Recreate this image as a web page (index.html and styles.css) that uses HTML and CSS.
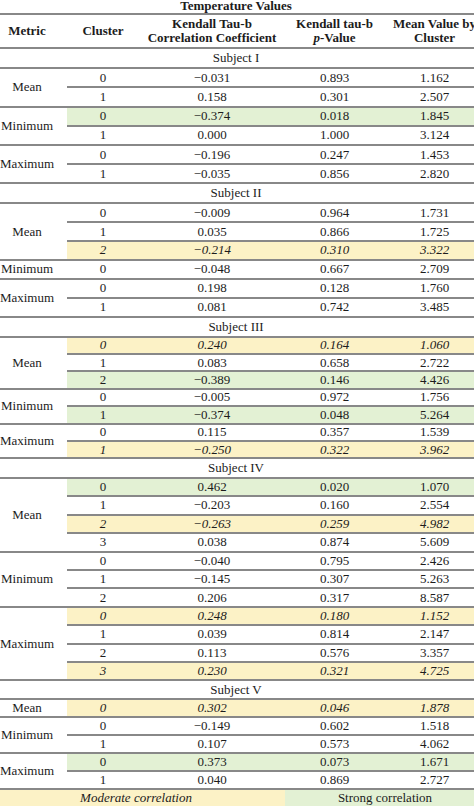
FILE: index.html
```html
<!DOCTYPE html>
<html>
<head>
<meta charset="utf-8">
<link rel="stylesheet" href="styles.css">
</head>
<body>
<div class="page">
<table class="tbl">
<colgroup>
<col class="c1"><col class="c2"><col class="c3"><col class="c4"><col class="c5">
</colgroup>
<tr class="rt"><th colspan="5" class="title"><div class="title-text">Temperature Values</div></th></tr>
<tr class="rh">
<th>Metric</th><th>Cluster</th><th>Kendall Tau-b<br>Correlation Coefficient</th><th>Kendall tau-b<br><i>p</i>-Value</th><th>Mean Value by<br>Cluster</th>
</tr>

<tr class="rs"><td colspan="5">Subject I</td></tr>
<tr class="r1"><td rowspan="2" class="m">Mean</td><td>0</td><td>−0.031</td><td>0.893</td><td>1.162</td></tr>
<tr class="r1"><td>1</td><td>0.158</td><td>0.301</td><td>2.507</td></tr>
<tr class="r1 g"><td rowspan="2" class="m">Minimum</td><td>0</td><td>−0.374</td><td>0.018</td><td>1.845</td></tr>
<tr class="r1"><td>1</td><td>0.000</td><td>1.000</td><td>3.124</td></tr>
<tr class="r1"><td rowspan="2" class="m">Maximum</td><td>0</td><td>−0.196</td><td>0.247</td><td>1.453</td></tr>
<tr class="r1"><td>1</td><td>−0.035</td><td>0.856</td><td>2.820</td></tr>

<tr class="rs"><td colspan="5">Subject II</td></tr>
<tr class="r2"><td rowspan="3" class="m">Mean</td><td>0</td><td>−0.009</td><td>0.964</td><td>1.731</td></tr>
<tr class="r2"><td>1</td><td>0.035</td><td>0.866</td><td>1.725</td></tr>
<tr class="r2 y"><td>2</td><td>−0.214</td><td>0.310</td><td>3.322</td></tr>
<tr class="r2"><td class="m">Minimum</td><td>0</td><td>−0.048</td><td>0.667</td><td>2.709</td></tr>
<tr class="r2"><td rowspan="2" class="m">Maximum</td><td>0</td><td>0.198</td><td>0.128</td><td>1.760</td></tr>
<tr class="r2"><td>1</td><td>0.081</td><td>0.742</td><td>3.485</td></tr>

<tr class="rs"><td colspan="5">Subject III</td></tr>
<tr class="r3 y"><td rowspan="3" class="m">Mean</td><td>0</td><td>0.240</td><td>0.164</td><td>1.060</td></tr>
<tr class="r3"><td>1</td><td>0.083</td><td>0.658</td><td>2.722</td></tr>
<tr class="r3 g"><td>2</td><td>−0.389</td><td>0.146</td><td>4.426</td></tr>
<tr class="r3"><td rowspan="2" class="m">Minimum</td><td>0</td><td>−0.005</td><td>0.972</td><td>1.756</td></tr>
<tr class="r3 g"><td>1</td><td>−0.374</td><td>0.048</td><td>5.264</td></tr>
<tr class="r3"><td rowspan="2" class="m">Maximum</td><td>0</td><td>0.115</td><td>0.357</td><td>1.539</td></tr>
<tr class="r3 y"><td>1</td><td>−0.250</td><td>0.322</td><td>3.962</td></tr>

<tr class="rs rs4"><td colspan="5">Subject IV</td></tr>
<tr class="r4 g"><td rowspan="4" class="m">Mean</td><td>0</td><td>0.462</td><td>0.020</td><td>1.070</td></tr>
<tr class="r4"><td>1</td><td>−0.203</td><td>0.160</td><td>2.554</td></tr>
<tr class="r4 y"><td>2</td><td>−0.263</td><td>0.259</td><td>4.982</td></tr>
<tr class="r4"><td>3</td><td>0.038</td><td>0.874</td><td>5.609</td></tr>
<tr class="r4"><td rowspan="3" class="m">Minimum</td><td>0</td><td>−0.040</td><td>0.795</td><td>2.426</td></tr>
<tr class="r4"><td>1</td><td>−0.145</td><td>0.307</td><td>5.263</td></tr>
<tr class="r4"><td>2</td><td>0.206</td><td>0.317</td><td>8.587</td></tr>
<tr class="r4 y"><td rowspan="4" class="m">Maximum</td><td>0</td><td>0.248</td><td>0.180</td><td>1.152</td></tr>
<tr class="r4"><td>1</td><td>0.039</td><td>0.814</td><td>2.147</td></tr>
<tr class="r4"><td>2</td><td>0.113</td><td>0.576</td><td>3.357</td></tr>
<tr class="r4 y"><td>3</td><td>0.230</td><td>0.321</td><td>4.725</td></tr>

<tr class="rs rs5"><td colspan="5">Subject V</td></tr>
<tr class="r5 y"><td class="m">Mean</td><td>0</td><td>0.302</td><td>0.046</td><td>1.878</td></tr>
<tr class="r5"><td rowspan="2" class="m">Minimum</td><td>0</td><td>−0.149</td><td>0.602</td><td>1.518</td></tr>
<tr class="r5"><td>1</td><td>0.107</td><td>0.573</td><td>4.062</td></tr>
<tr class="r5 g"><td rowspan="2" class="m">Maximum</td><td>0</td><td>0.373</td><td>0.073</td><td>1.671</td></tr>
<tr class="r5"><td>1</td><td>0.040</td><td>0.869</td><td>2.727</td></tr>

<tr class="rl"><td colspan="3" class="leg-mod">Moderate correlation</td><td colspan="2" class="leg-strong">Strong correlation</td></tr>
</table>
</div>
</body>
</html>
```
FILE: styles.css
```css
html, body {
  margin: 0;
  padding: 0;
  background: #ffffff;
}
.page {
  width: 474px;
  height: 806px;
  overflow: hidden;
  position: relative;
}
.tbl {
  border-collapse: collapse;
  table-layout: fixed;
  width: 498px;
  margin-left: -13px;
  font-family: "Liberation Serif", "Times New Roman", serif;
  font-size: 13px;
  color: #1c1c1c;
}
.c1 { width: 80px; }
.c2 { width: 72px; }
.c3 { width: 146px; }
.c4 { width: 99px; }
.c5 { width: 101px; }
.tbl th, .tbl td {
  padding: 0;
  text-align: center;
  vertical-align: middle;
  border-bottom: 2px solid #888888;
  line-height: 14px;
  white-space: nowrap;
}
.tbl th {
  font-weight: bold;
}
.rt { height: 14.3px; }
.title {
  vertical-align: top;
  overflow: hidden;
}
.title-text {
  height: 11px;
  margin-top: -4px;
  line-height: 13px;
}
.rh { height: 34px; }
.rs { height: 20px; }
.rs4 { height: 19.5px; }
.rs5 { height: 18.3px; }
.r1 { height: 19.17px; }
.r2 { height: 18.9px; }
.r3 { height: 17.4px; }
.r4 { height: 18.43px; }
.r5 { height: 18.14px; }
.rl { height: 18px; }
.g td { background: #e3f1d4; }
.y td { background: #fcf2c6; }
.y td { font-style: italic; }
.tbl td.m {
  background: #ffffff;
  font-style: normal;
}
.leg-mod {
  background: #fcf2c6;
  font-style: italic;
}
.leg-strong {
  background: #e3f1d4;
}
```
